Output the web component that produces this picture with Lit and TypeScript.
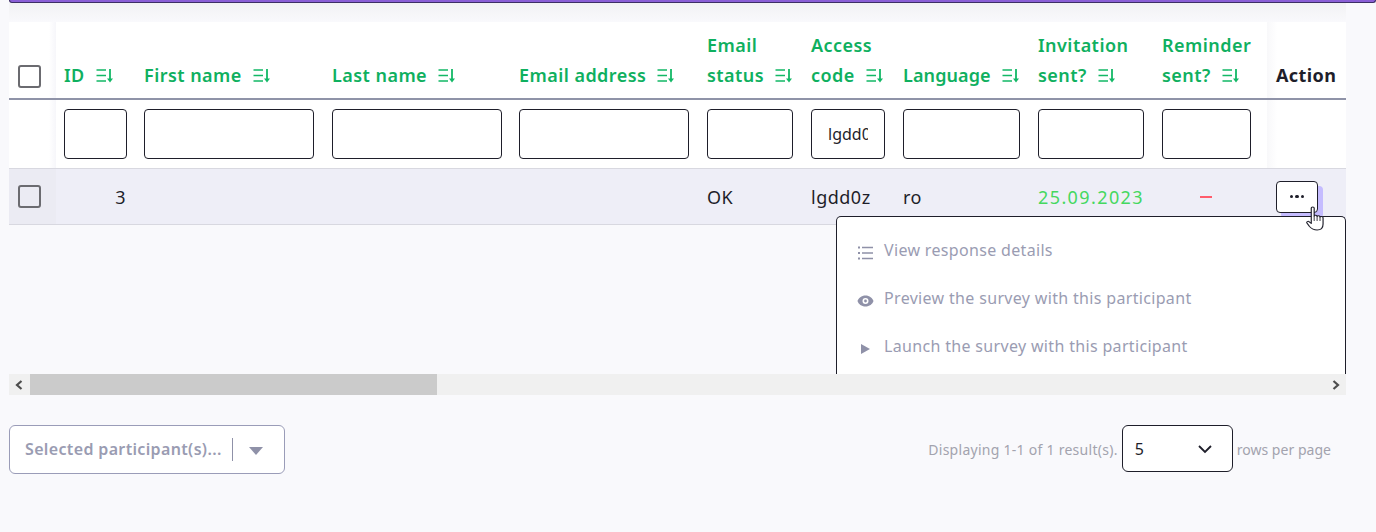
import { LitElement, html, css } from "lit";
import { customElement } from "lit/decorators.js";

const sortIcon = html`<svg class="sort" width="18" height="16" viewBox="0 0 18 16" fill="none" stroke="currentColor" stroke-width="1.6">
  <path d="M0.5 2H10M0.5 7.500H10M0.5 13H10" /><path d="M14 1V13" stroke-width="1.800" /><path d="M11 10.600H17L14 14.600Z" fill="currentColor" stroke="none" />
</svg>`;

const cols = [
  { w: 80, iw: 63, label: ["ID"] },
  { w: 188, iw: 170, label: ["First name"] },
  { w: 187, iw: 170, label: ["Last name"] },
  { w: 188, iw: 170, label: ["Email address"] },
  { w: 104, iw: 86, label: ["Email", "status"] },
  { w: 92, iw: 74, label: ["Access", "code"], value: "lgdd0z" },
  { w: 135, iw: 117, label: ["Language"], tight: true },
  { w: 124, iw: 106, label: ["Invitation", "sent?"] },
  { w: 113, iw: 89, label: ["Reminder", "sent?"] },
];

@customElement("app-root")
export class AppRoot extends LitElement {
  static styles = css`
    :host { display: block; width: 1376px; height: 532px; overflow: hidden; background: #f9f9fc; font-family: "Noto Sans", sans-serif; color: #1e1e2a; }
    * { box-sizing: border-box; }
    .topbar { height: 3px; margin-left: 9px; background: #8a5fd6; border: solid #3d2f66; border-width: 0 1px 1px 1px; border-radius: 0 0 4px 4px; }
    .shade { height: 19px; margin-left: 9px; width: 1337px; background: linear-gradient(#f2f2f4, #f9f9fc); }
    .wrap { position: relative; margin-left: 9px; width: 1337px; }
    .scroller { height: 352px; overflow: hidden; }
    table { border-collapse: separate; border-spacing: 0; table-layout: fixed; width: 1337px; }
    th, td { padding: 0 0 0 8px; }
    th { height: 78px; vertical-align: bottom; text-align: left; background: #fff; border-bottom: 2px solid #8f93a8; padding-bottom: 8px; font-size: 18px; font-weight: 600; line-height: 30px; color: #0fb05f; letter-spacing: 0.45px; }
    th.tight { letter-spacing: 0.1px; }
    .nowrap { white-space: nowrap; }
    .sort { margin-left: 11px; vertical-align: -2px; color: #12b866; }
    th.action { color: #1e1e2a; padding-left: 9px; font-weight: 700; letter-spacing: 0.4px; background: linear-gradient(to right, #f8f8fa, #fff 10px); }
    .checkcell { padding: 0; background: linear-gradient(to right, #fff 85%, #f6f6fa); }
    th.checkcell { padding: 0 0 10px 9px; }
    .box { display: block; width: 23px; height: 23px; border: 2px solid #6b6b70; border-radius: 3px; background: transparent; }
    td.checkcell .box { margin-left: 9px; }
    .filter td { height: 69px; background: #fff; border-bottom: 1px solid #d8d8e0; }
    .filter td.checkcell { background: linear-gradient(to right, #fff 85%, #f6f6fa); }
    .filter td.action { background: linear-gradient(to right, #f8f8fa, #fff 10px); }
    input { display: block; height: 50px; border: 1px solid #1e1e2a; border-radius: 4px; background: #fff; padding: 0 16px; font: 400 16px "Noto Sans", sans-serif; color: #1e1e2a; outline: none; }
    .data td { height: 56px; background: #eeeef7; border-bottom: 1px solid #d8d8e0; font-size: 18px; letter-spacing: 0.5px; }
    .data td.checkcell { background: #ebebf3; }
    .data td.num { text-align: right; padding-right: 10px; }
    .data td.green { color: #45d85f; letter-spacing: 1.4px; }
    .dash { display: block; width: 12px; height: 2px; background: #ff5c6c; margin-left: 38px; }
    .dots { display: flex; align-items: center; justify-content: center; gap: 2px; width: 42px; height: 32px; margin-left: 1px; padding: 0; background: #fff; border: 1px solid #1e1e2a; border-radius: 4px; box-shadow: 5px 5px 0 #c5bcff; }
    .dots i { width: 3.500px; height: 3.500px; border-radius: 50%; background: #1e1e2a; }
    .menu { position: absolute; left: 827px; top: 194px; width: 510px; height: 158px; overflow: hidden; background: #fff; border: 1.500px solid #1e1e2a; border-bottom: 0; border-radius: 5px 5px 0 0; padding-top: 9px; }
    .menu div { display: flex; align-items: center; height: 48px; padding-left: 20px; gap: 10px; font-size: 16px; color: #9a9cb2; letter-spacing: 0.33px; }
    .menu svg { width: 17px; height: 16px; flex: none; margin-top: 6px; color: #8f91a8; }
    .menu span { margin-top: -1px; }
    .cursor { position: absolute; left: 1297px; top: 184px; z-index: 3; }
    .hbar { position: relative; display: flex; align-items: center; justify-content: space-between; height: 21px; background: #f0f0f0; }
    .hbar b { position: absolute; left: 21px; top: 0; width: 407px; height: 21px; background: #cbcbcb; }
    .hbar svg { margin: 0 5px; }
    footer { display: flex; justify-content: space-between; align-items: flex-start; margin-top: 30px; padding: 0 45px 0 9px; }
    .bulk { display: flex; align-items: center; width: 276px; height: 49px; padding-left: 15px; padding-bottom: 2px; background: #fff; border: 1px solid #9a9cb8; border-radius: 6px; font-size: 16px; font-weight: 600; color: #9a9cb2; letter-spacing: 0.35px; }
    .bulk .sep { width: 1px; height: 23px; background: #8f91a8; margin-left: auto; margin-top: 2px; }
    .bulk svg { margin: 4px 21px 0 16px; }
    .pager { display: flex; align-items: center; gap: 4px; height: 47px; font-size: 14px; color: #a3a3ae; letter-spacing: 0.27px; }
    .pager > span { padding-top: 2px; }
    .pager .rows { letter-spacing: 0.03px; }
    .size { display: flex; align-items: center; justify-content: space-between; width: 111px; height: 47px; padding: 0 19px 0 12px; background: #fff; border: 1px solid #1e1e2a; border-radius: 6px; color: #1e1e2a; font-size: 16px; letter-spacing: 0; }
  `;

  render() {
    return html`
      <div class="topbar"></div>
      <div class="shade"></div>
      <div class="wrap">
        <div class="scroller">
          <table>
            <colgroup><col style="width:47px" />${cols.map((c) => html`<col style="width:${c.w}px" />`)}<col style="width:79px" /></colgroup>
            <thead>
              <tr>
                <th class="checkcell"><span class="box"></span></th>
                ${cols.map((c) => html`<th class=${c.tight ? "tight" : ""}>${c.label.length > 1 ? html`${c.label[0]}<br />` : ""}<span class="nowrap">${c.label[c.label.length - 1]}${sortIcon}</span></th>`)}
                <th class="action">Action</th>
              </tr>
            </thead>
            <tbody>
              <tr class="filter">
                <td class="checkcell"></td>
                ${cols.map((c) => html`<td><input style="width:${c.iw}px" .value=${c.value ?? ""} aria-label=${c.label.join(" ")} /></td>`)}
                <td class="action"></td>
              </tr>
              <tr class="data">
                <td class="checkcell"><span class="box"></span></td>
                <td class="num">3</td>
                <td></td><td></td><td></td>
                <td>OK</td>
                <td>lgdd0z</td>
                <td>ro</td>
                <td class="green">25.09.2023</td>
                <td><span class="dash"></span></td>
                <td><button class="dots" aria-label="Actions"><i></i><i></i><i></i></button></td>
              </tr>
            </tbody>
          </table>
        </div>
        <div class="menu">
          <div>
            <svg viewBox="0 0 17 16" fill="none" stroke="currentColor" stroke-width="1.500"><path d="M5 2.500H16M5 8H16M5 13.500H16" /><path d="M1 2.500H3M1 8H3M1 13.500H3" stroke-width="2" /></svg>
            <span>View response details</span>
          </div>
          <div>
            <svg viewBox="0 0 17 16"><path fill="currentColor" fill-rule="evenodd" d="M8.500 2.500C12.500 2.500 15.600 5 16.500 8C15.600 11 12.500 13.500 8.500 13.500C4.500 13.500 1.400 11 .5 8C1.400 5 4.500 2.500 8.500 2.500ZM8.500 5A3 3 0 1 0 8.500 11A3 3 0 1 0 8.500 5ZM8.500 6.600A1.400 1.400 0 1 1 8.500 9.400A1.400 1.400 0 1 1 8.500 6.600Z" /></svg>
            <span>Preview the survey with this participant</span>
          </div>
          <div>
            <svg viewBox="0 0 17 16"><path fill="currentColor" d="M4 3L13 8L4 13Z" /></svg>
            <span>Launch the survey with this participant</span>
          </div>
        </div>
        <svg class="cursor" width="18" height="25" viewBox="0 0 15.400 25" preserveAspectRatio="none">
          <path fill="#fff" stroke="#1e1e2a" stroke-width="1" stroke-linejoin="round" d="M4.500 2C4.500 .6 7 .6 7 2V10C7 8.800 9.500 8.800 9.500 10.500C9.500 9.500 12 9.500 12 11C12 10.200 14.600 10.200 14.600 11.800V18C14.600 21.500 13 24 9.500 24C6 24 4.500 22.500 3 20.500L.8 17C.2 15.800 1.800 14.800 2.800 15.800L4.500 17.500Z" />
          <path fill="none" stroke="#1e1e2a" stroke-width=".8" d="M7 10V15M9.500 10.500V15M12 11V15" />
        </svg>
        <div class="hbar">
          <svg width="10" height="10" viewBox="0 0 10 10" fill="none" stroke="#4d4d4d" stroke-width="2.200"><path d="M7.500 1L3 5L7.500 9" /></svg>
          <b></b>
          <svg width="10" height="10" viewBox="0 0 10 10" fill="none" stroke="#4d4d4d" stroke-width="2.200"><path d="M2.500 1L7 5L2.500 9" /></svg>
        </div>
      </div>
      <footer>
        <div class="bulk">
          <span>Selected participant(s)...</span>
          <span class="sep"></span>
          <svg width="14" height="8" viewBox="0 0 14 8"><path fill="#8f91a8" d="M0 0H14L7 8Z" /></svg>
        </div>
        <div class="pager">
          <span>Displaying 1-1 of 1 result(s).</span>
          <div class="size">
            <span>5</span>
            <svg width="16" height="10" viewBox="0 0 16 10" fill="none" stroke="#1e1e2a" stroke-width="1.800"><path d="M2 2L8 8L14 2" /></svg>
          </div>
          <span class="rows">rows per page</span>
        </div>
      </footer>
    `;
  }
}
